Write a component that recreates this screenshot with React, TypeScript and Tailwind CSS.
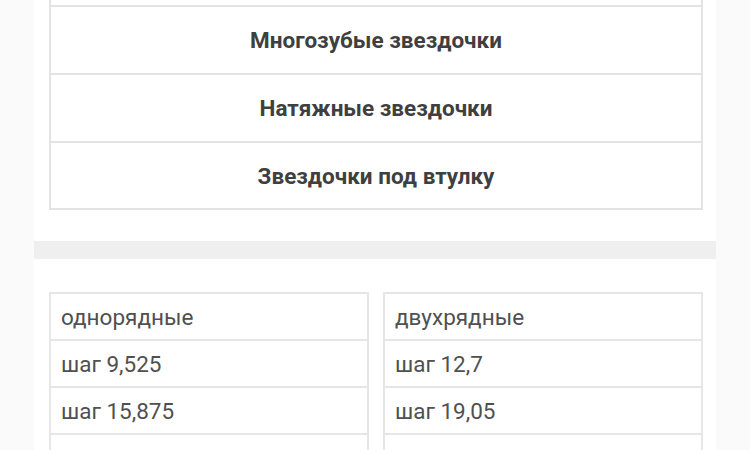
import React from 'react';

const categories = ['Многозубые звездочки', 'Натяжные звездочки', 'Звездочки под втулку'];

const singleRow = ['однорядные', 'шаг 9,525', 'шаг 15,875', 'шаг 25,4'];
const doubleRow = ['двухрядные', 'шаг 12,7', 'шаг 19,05', 'шаг 31,75'];

function StepTable({ rows }: { rows: string[] }) {
    return (
        <div className="flex-1 border-2 border-[#e6e6e6] border-b-0">
            {rows.map((row) => (
                <div
                    key={row}
                    className="h-[47px] flex items-center px-[10px] pt-[2px] border-b-2 border-[#e6e6e6] text-[22.5px] text-[#505050]"
                >
                    {row}
                </div>
            ))}
        </div>
    );
}

export default function App() {
    return (
        <div
            className="h-[450px] overflow-hidden bg-[#fafafa] px-[34px]"
            style={{ fontFamily: 'Roboto, "Liberation Sans", sans-serif' }}
        >
            <div className="bg-white min-h-full">
                {/* Category list */}
                <div className="ml-[15px] mr-[13px] mt-[-63px] border-2 border-[#e3e3e3]">
                    <div className="h-[68px] border-b-2 border-[#e3e3e3]" />
                    {categories.map((title, i) => (
                        <div
                            key={title}
                            className={
                                'flex items-center justify-center text-[22.5px] font-bold text-[#3f3f3f] ' +
                                (i < categories.length - 1 ? 'h-[68px] border-b-2 border-[#e3e3e3]' : 'h-[65px]')
                            }
                        >
                            <span className="mt-[2px]">{title}</span>
                        </div>
                    ))}
                </div>

                {/* Divider band */}
                <div className="mt-[31px] h-[18px] bg-[#efefef]" />

                {/* Step tables */}
                <div className="flex gap-[14px] ml-[15px] mr-[13px] mt-[33px]">
                    <StepTable rows={singleRow} />
                    <StepTable rows={doubleRow} />
                </div>
            </div>
        </div>
    );
}
